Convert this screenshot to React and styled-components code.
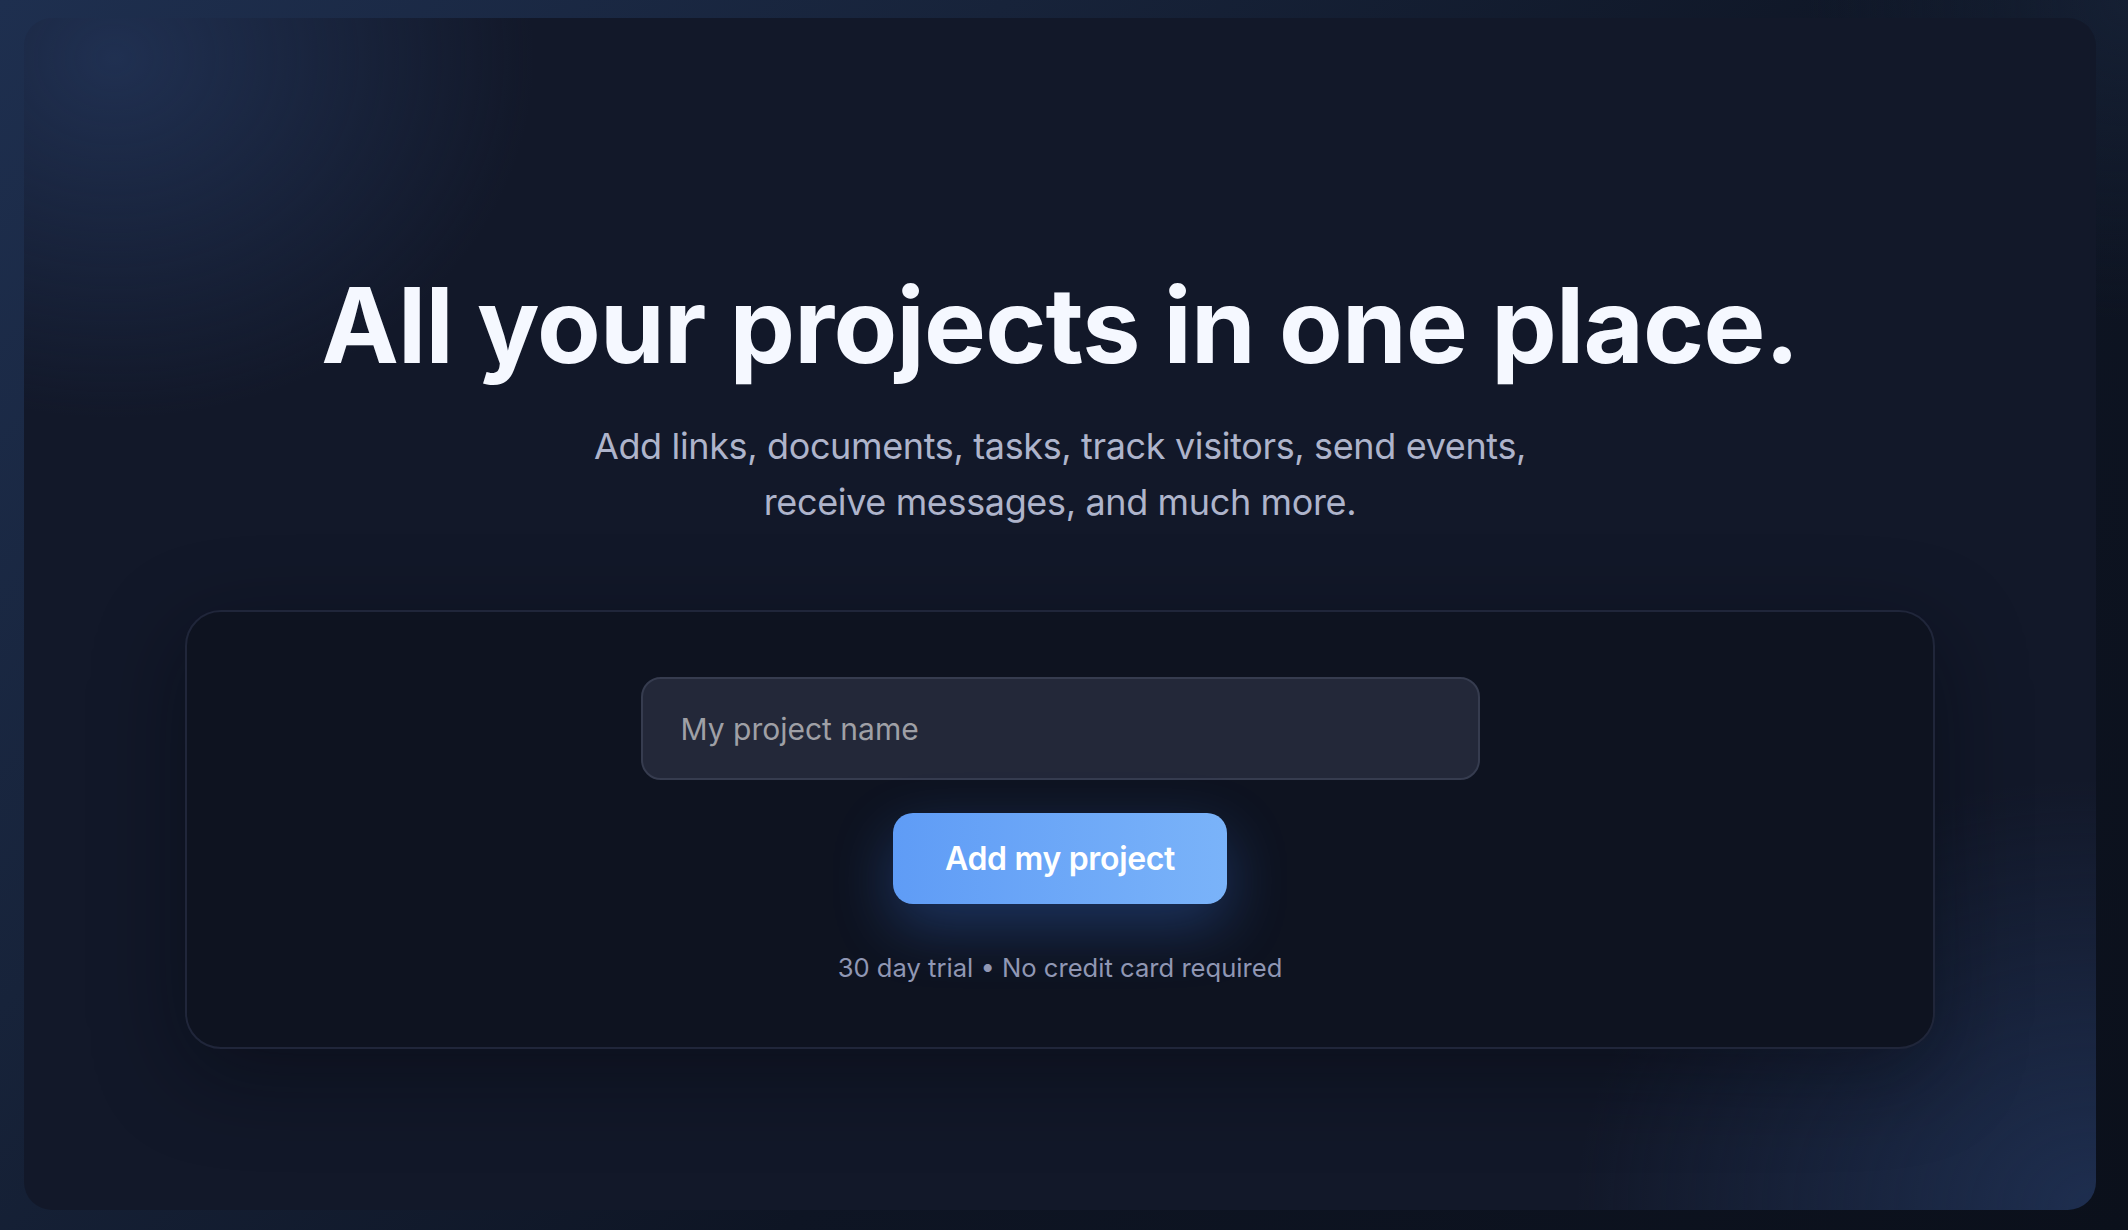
import React from 'react';
import styled, { createGlobalStyle } from 'styled-components';

const GlobalStyle = createGlobalStyle`
  * {
    box-sizing: border-box;
  }

  html,
  body {
    margin: 0;
    padding: 0;
    background: #0c1220;
  }

  body {
    font-family: Inter, 'Noto Sans', 'Liberation Sans', sans-serif;
    -webkit-font-smoothing: antialiased;
  }
`;

const Page = styled.div`
  display: flex;
  min-height: 100vh;
  padding: 18px 32px 21px 24px;
  background:
    radial-gradient(circle at 100% 0%, rgba(24, 36, 58, 0.7), transparent 320px),
    linear-gradient(135deg, #1e2f4f 0%, #17233a 30%, #0e1524 60%, #0b101b 100%);
`;

const Panel = styled.main`
  flex: 1;
  display: flex;
  flex-direction: column;
  align-items: center;
  padding: 250px 161px 161px;
  border-radius: 28px;
  background:
    radial-gradient(ellipse 420px 360px at 90px 40px, rgba(34, 52, 88, 0.85), transparent 100%),
    radial-gradient(ellipse 520px 430px at 100% 100%, rgba(32, 50, 86, 0.85), transparent 100%),
    #121829;
`;

const Title = styled.h1`
  margin: 0;
  font-size: 104px;
  line-height: 1.1;
  font-weight: 700;
  letter-spacing: -0.007em;
  color: #f5f8ff;
  text-align: center;
`;

const Lead = styled.p`
  margin: 36px 0 0;
  max-width: 960px;
  font-size: 36px;
  line-height: 56px;
  font-weight: 400;
  letter-spacing: -0.01em;
  color: #aeb4cb;
  text-align: center;
`;

const Card = styled.section`
  align-self: stretch;
  display: flex;
  flex-direction: column;
  align-items: center;
  margin-top: 80px;
  padding: 65px 0 61px;
  border: 2px solid #20263a;
  border-radius: 36px;
  background: #0e1320;
  box-shadow: 0 24px 90px rgba(4, 7, 14, 0.45);
`;

const NameInput = styled.input`
  width: 839px;
  height: 103px;
  padding: 0 38px;
  border: 2px solid #363c4f;
  border-radius: 20px;
  background: #232839;
  font-family: inherit;
  font-size: 30px;
  color: #e6e9f2;
  outline: none;

  &::placeholder {
    color: #9fa0a6;
  }
`;

const SubmitButton = styled.button`
  margin-top: 33px;
  width: 334px;
  height: 91px;
  border: none;
  border-radius: 20px;
  background: linear-gradient(90deg, #5f9cf6 0%, #7ab3f9 100%);
  box-shadow: 0 22px 60px rgba(59, 120, 230, 0.32);
  font-family: inherit;
  font-size: 32px;
  font-weight: 600;
  letter-spacing: -0.01em;
  color: #ffffff;
  cursor: pointer;
`;

const Note = styled.p`
  margin: 46px 0 0;
  font-size: 25.6px;
  line-height: 36px;
  color: #9097b4;
`;

export default function App() {
  return (
    <>
      <GlobalStyle />
      <Page>
        <Panel>
          <Title>All your projects in one place.</Title>
          <Lead>
            Add links, documents, tasks, track visitors, send events,
            <br />
            receive messages, and much more.
          </Lead>
          <Card>
            <NameInput type="text" placeholder="My project name" />
            <SubmitButton type="button">Add my project</SubmitButton>
            <Note>30 day trial • No credit card required</Note>
          </Card>
        </Panel>
      </Page>
    </>
  );
}
